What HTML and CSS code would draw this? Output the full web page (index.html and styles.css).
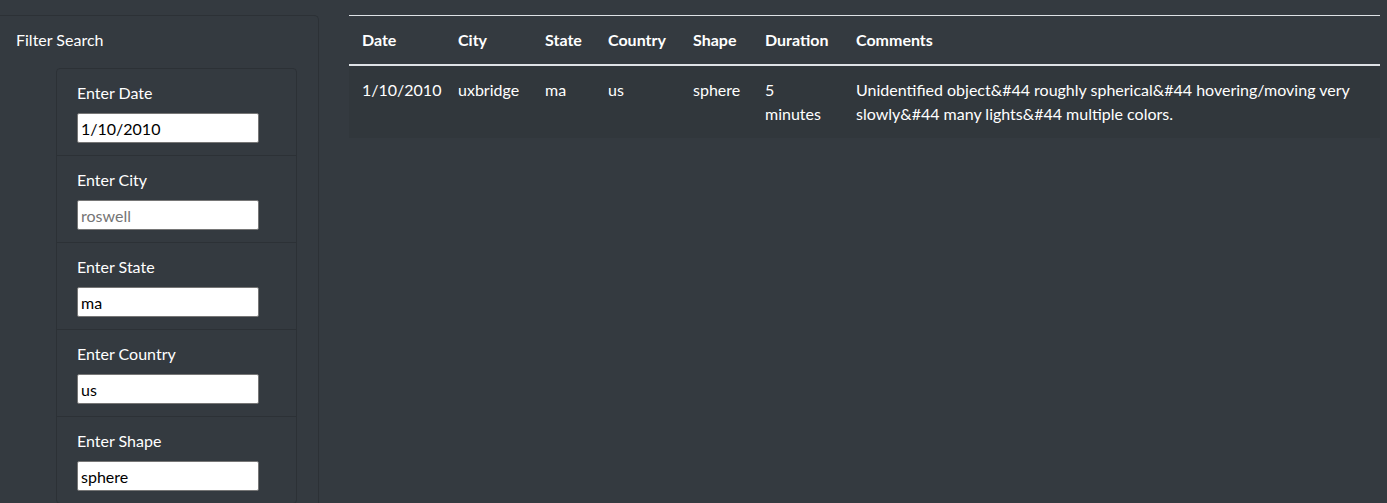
FILE: index.html
```html
<!DOCTYPE html>
<html lang="en">
<head>
<meta charset="utf-8">
<title>UFO Sightings</title>
<link rel="stylesheet" href="styles.css">
</head>
<body>
<div class="layout">
  <aside class="filter-card">
    <div class="filter-title">Filter Search</div>
    <ul class="filter-list">
      <li class="filter-item">
        <label class="filter-label" for="date">Enter Date</label>
        <input class="filter-input" id="date" type="text" value="1/10/2010">
      </li>
      <li class="filter-item">
        <label class="filter-label" for="city">Enter City</label>
        <input class="filter-input" id="city" type="text" placeholder="roswell">
      </li>
      <li class="filter-item">
        <label class="filter-label" for="state">Enter State</label>
        <input class="filter-input" id="state" type="text" value="ma">
      </li>
      <li class="filter-item">
        <label class="filter-label" for="country">Enter Country</label>
        <input class="filter-input" id="country" type="text" value="us">
      </li>
      <li class="filter-item">
        <label class="filter-label" for="shape">Enter Shape</label>
        <input class="filter-input" id="shape" type="text" value="sphere">
      </li>
    </ul>
  </aside>
  <main class="results">
    <table class="ufo-table">
      <colgroup>
        <col class="c-date"><col class="c-city"><col class="c-state"><col class="c-country"><col class="c-shape"><col class="c-duration"><col class="c-comments">
      </colgroup>
      <thead>
        <tr>
          <th>Date</th><th>City</th><th>State</th><th>Country</th><th>Shape</th><th>Duration</th><th>Comments</th>
        </tr>
      </thead>
      <tbody>
        <tr>
          <td>1/10/2010</td><td>uxbridge</td><td>ma</td><td>us</td><td>sphere</td><td>5 minutes</td>
          <td>Unidentified object&amp;#44 roughly spherical&amp;#44 hovering/moving very slowly&amp;#44 many lights&amp;#44 multiple colors.</td>
        </tr>
      </tbody>
    </table>
  </main>
</div>
</body>
</html>
```
FILE: styles.css
```css
* { box-sizing: border-box; }
html, body { margin: 0; height: 100%; }
body {
  background: #343a40;
  color: #fff;
  font-family: Lato, "Open Sans", sans-serif;
  font-size: 16px;
  line-height: 24px;
  overflow: hidden;
}
.layout {
  display: flex;
  align-items: flex-start;
  padding-top: 15px;
  height: 100vh;
}
.filter-card {
  width: 319px;
  flex: none;
  align-self: stretch;
  overflow: hidden;
  border: 1px solid #2c3136;
  border-left: none;
  border-bottom: none;
  border-radius: 0 5px 0 0;
  padding: 12px 20px 0 15px;
}
.filter-title { margin: 0 0 16px 1px; }
.filter-list {
  list-style: none;
  margin: 0 0 0 41px;
  padding: 0;
  width: 241px;
  border: 1px solid #2c3136;
  border-radius: 4px;
}
.filter-item {
  padding: 12px 20px;
  border-top: 1px solid #2c3136;
  display: flex;
  flex-direction: column;
  align-items: flex-start;
}
.filter-item:first-child { border-top: none; }
.filter-label { margin-bottom: 8px; }
.filter-input {
  width: 182px;
  height: 30px;
  border: 1px solid #767676;
  border-radius: 2px;
  padding: 1px 3px;
  font: inherit;
  color: #000;
  background: #fff;
}
.filter-input::placeholder { color: #757575; }
.results {
  margin-left: 30px;
  width: 1031px;
  flex: none;
}
.ufo-table {
  width: 100%;
  border-collapse: collapse;
  table-layout: fixed;
}
.c-date { width: 96px; }
.c-city { width: 87px; }
.c-state { width: 63px; }
.c-country { width: 85px; }
.c-shape { width: 72px; }
.c-duration { width: 91px; }
.c-comments { width: 537px; }
.ufo-table th {
  text-align: left;
  font-weight: 700;
  padding: 12px 12px 12px 13px;
  white-space: nowrap;
  border-top: 1px solid #dee2e6;
  border-bottom: 2px solid #dee2e6;
  vertical-align: bottom;
}
.ufo-table td {
  padding: 12px 11px 12px 13px;
  vertical-align: top;
  background: rgba(0, 0, 0, 0.05);
}
```
